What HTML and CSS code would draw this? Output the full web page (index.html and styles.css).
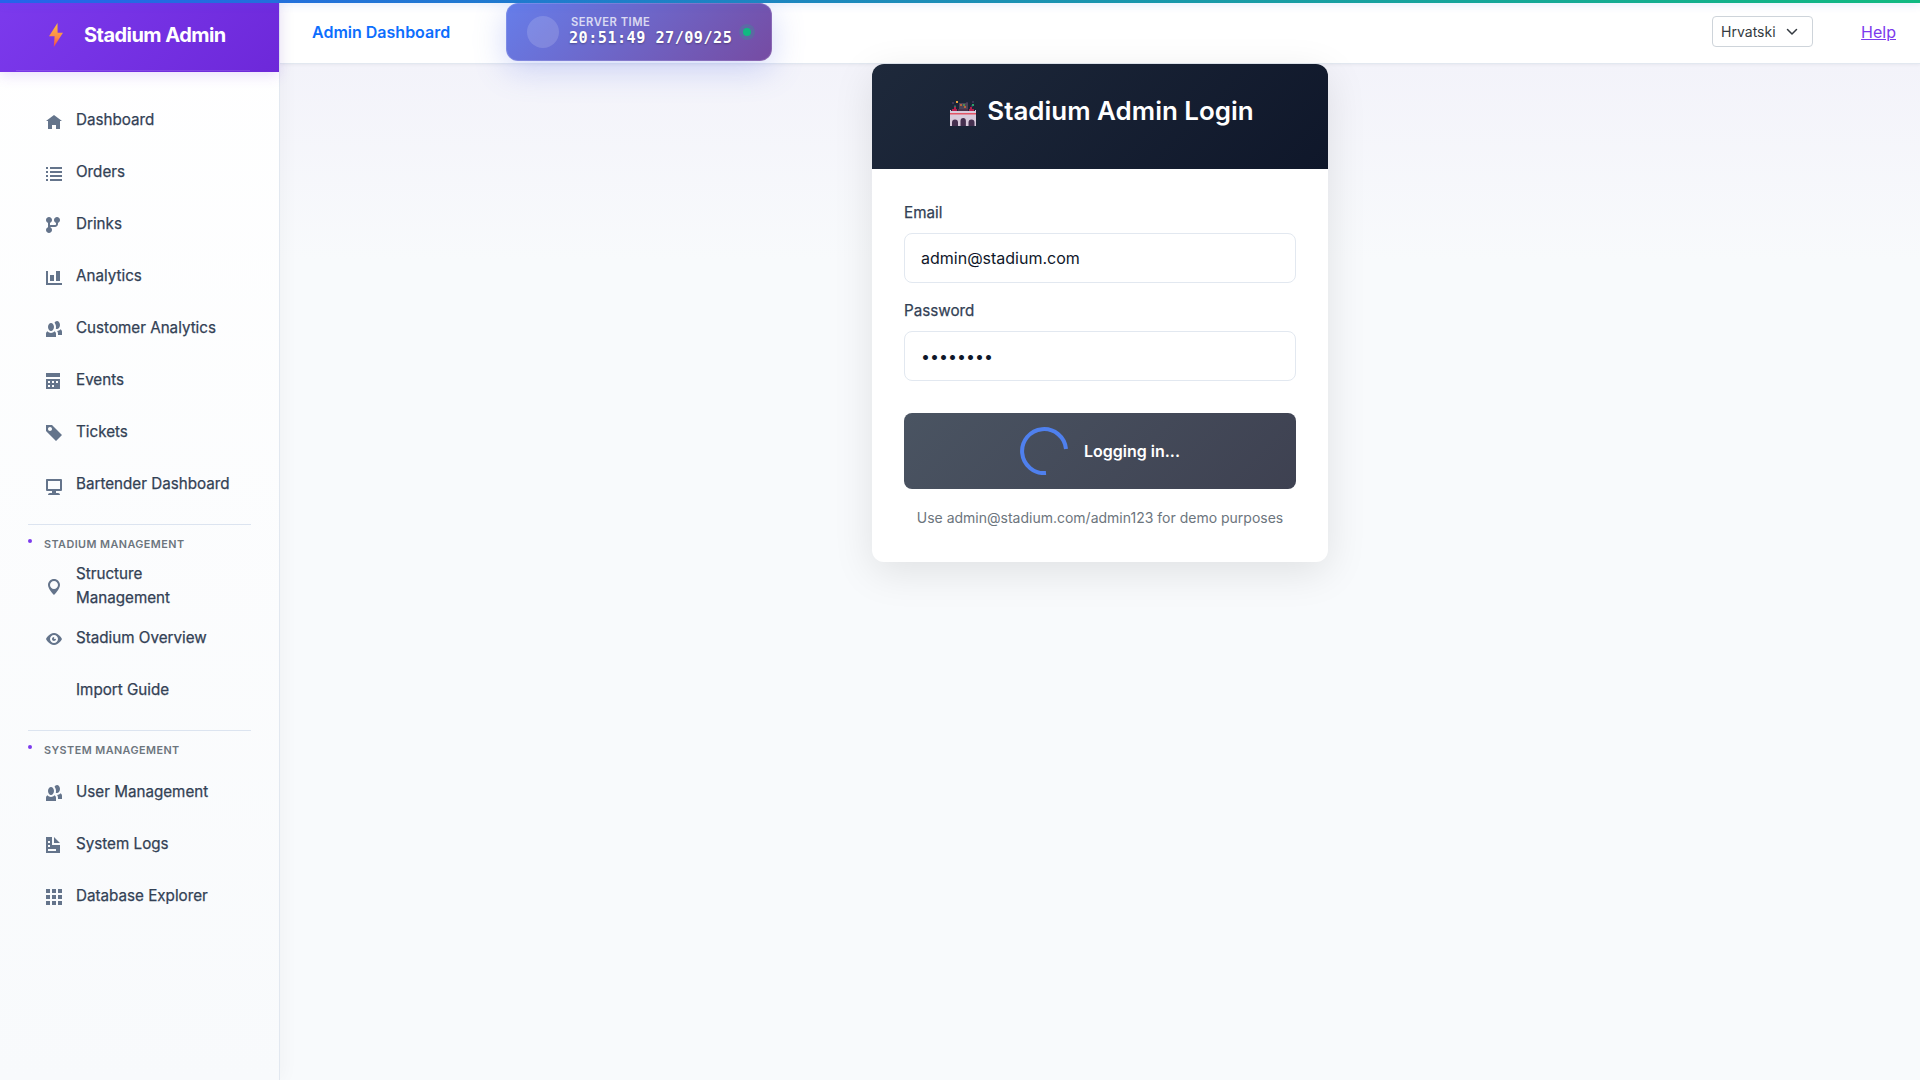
FILE: index.html
```html
<!DOCTYPE html>
<html lang="en">
<head>
<meta charset="utf-8">
<title>Stadium Admin</title>
<link rel="stylesheet" href="styles.css">
</head>
<body>
<div class="progress"></div>
<div class="page">
  <aside class="sidebar">
    <div class="brand">
      <svg class="bolt" viewBox="0 0 14 24"><defs><linearGradient id="bolt" x1="0" y1="0" x2="0" y2="1"><stop offset="0" stop-color="#fbbf3c"/><stop offset=".6" stop-color="#fb8a4a"/><stop offset="1" stop-color="#f0454a"/></linearGradient></defs><path d="M8.500 0 0 13.300h5.600L4.800 24 14 9.800H8.600z" fill="url(#bolt)"/></svg>
      <span>Stadium Admin</span>
    </div>
    <nav class="nav">
      <a class="item"><svg class="icon" viewBox="0 0 8 8"><path transform="translate(0 1)" d="M4 0l-4 3h1v4h2v-2h2v2h2v-4.03l1 .03-4-3z"/></svg>Dashboard</a>
      <a class="item"><svg class="icon" viewBox="0 0 8 8"><path transform="translate(0 1)" d="M0 0v1h1v-1zM2 0v1h6v-1zM0 2v1h1v-1zM2 2v1h6v-1zM0 4v1h1v-1zM2 4v1h6v-1zM0 6v1h1v-1zM2 6v1h6v-1z"/></svg>Orders</a>
      <a class="item"><svg class="icon" viewBox="0 0 8 8"><path d="M1.5 0c-.83 0-1.5.67-1.5 1.5 0 .66.41 1.2 1 1.41v2.19c-.59.2-1 .75-1 1.41 0 .83.67 1.5 1.5 1.5s1.5-.67 1.5-1.5c0-.6-.34-1.1-.84-1.34.09-.09.21-.16.34-.16h2c.82 0 1.5-.68 1.5-1.5v-.59c.59-.2 1-.75 1-1.41 0-.83-.67-1.5-1.5-1.5s-1.5.67-1.5 1.5c0 .66.41 1.2 1 1.41v.59c0 .28-.22.5-.5.5h-2c-.17 0-.35.04-.5.09v-1.19c.59-.2 1-.75 1-1.41 0-.83-.67-1.5-1.5-1.5z"/></svg>Drinks</a>
      <a class="item"><svg class="icon" viewBox="0 0 8 8"><path transform="translate(0 1)" d="M0 0v7h8v-1h-7v-6h-1zm5 0v5h2v-5h-2zm-3 2v3h2v-3h-2z"/></svg>Analytics</a>
      <a class="item"><svg class="icon" viewBox="0 0 8 8"><path d="M5.5 0c-.51 0-.95.35-1.22.88.45.54.72 1.28.72 2.13 0 .29-.03.55-.09.81.19.11.38.19.59.19.83 0 1.5-.9 1.5-2s-.67-2-1.5-2zm-3 1c-.83 0-1.5.9-1.5 2s.67 2 1.5 2 1.5-.9 1.5-2-.67-2-1.5-2zm4.75 3.16c-.43.51-1.02.82-1.69.84.27.38.44.84.44 1.34v.66h2v-1.66c0-.52-.31-.97-.75-1.19zm-6.5 1c-.44.22-.75.67-.75 1.19v1.66h5v-1.66c0-.52-.31-.97-.75-1.19-.45.53-1.06.84-1.75.84s-1.3-.32-1.75-.84z"/></svg>Customer Analytics</a>
      <a class="item"><svg class="icon" viewBox="0 0 8 8"><path d="M0 0v2h7v-2h-7zm0 3v4.91c0 .05.04.09.09.09h6.81c.05 0 .09-.04.09-.09v-4.91h-7zm1 1h1v1h-1v-1zm2 0h1v1h-1v-1zm2 0h1v1h-1v-1zm-4 2h1v1h-1v-1zm2 0h1v1h-1v-1z"/></svg>Events</a>
      <a class="item"><svg class="icon" viewBox="0 0 8 8"><path d="M0 0v3l5 5 3-3-5-5h-3zm2 1c.55 0 1 .45 1 1s-.45 1-1 1-1-.45-1-1 .45-1 1-1z"/></svg>Tickets</a>
      <a class="item"><svg class="icon" viewBox="0 0 8 8"><path transform="translate(0 1)" d="M.34 0a.5.5 0 0 0-.34.5v5a.5.5 0 0 0 .5.5h2.500v1h-1c-.55 0-1 .45-1 1h6c0-.55-.45-1-1-1h-1v-1h2.500a.5.5 0 0 0 .5-.5v-5a.5.5 0 0 0-.5-.5h-7a.5.5 0 0 0-.16 0zm.66 1h6v4h-6v-4z"/></svg>Bartender Dashboard</a>
      <div class="section">STADIUM MANAGEMENT</div>
      <a class="item"><svg class="icon" viewBox="0 0 8 8"><path transform="translate(1 0)" d="M3 0c-1.66 0-3 1.34-3 3 0 2 3 5 3 5s3-3 3-5c0-1.66-1.34-3-3-3zm0 1c1.11 0 2 .9 2 2 0 1.11-.89 2-2 2-1.1 0-2-.89-2-2 0-1.1.9-2 2-2z"/></svg>Structure Management</a>
      <a class="item"><svg class="icon" viewBox="0 0 8 8"><path transform="translate(0 1)" d="M4.03 0c-2.53 0-4.03 3-4.03 3s1.5 3 4.03 3c2.47 0 3.97-3 3.97-3s-1.5-3-3.97-3zm-.03 1c1.11 0 2 .9 2 2 0 1.11-.89 2-2 2-1.1 0-2-.89-2-2 0-1.1.9-2 2-2zm0 1c-.55 0-1 .45-1 1s.45 1 1 1 1-.45 1-1c0-.1-.04-.19-.06-.28-.08.16-.24.28-.44.28-.28 0-.5-.22-.5-.5 0-.2.12-.36.28-.44-.09-.03-.18-.06-.28-.06z"/></svg>Stadium Overview</a>
      <a class="item"><span class="icon"></span>Import Guide</a>
      <div class="section">SYSTEM MANAGEMENT</div>
      <a class="item"><svg class="icon" viewBox="0 0 8 8"><path d="M5.5 0c-.51 0-.95.35-1.22.88.45.54.72 1.28.72 2.13 0 .29-.03.55-.09.81.19.11.38.19.59.19.83 0 1.5-.9 1.5-2s-.67-2-1.5-2zm-3 1c-.83 0-1.5.9-1.5 2s.67 2 1.5 2 1.5-.9 1.5-2-.67-2-1.5-2zm4.75 3.16c-.43.51-1.02.82-1.69.84.27.38.44.84.44 1.34v.66h2v-1.66c0-.52-.31-.97-.75-1.19zm-6.5 1c-.44.22-.75.67-.75 1.19v1.66h5v-1.66c0-.52-.31-.97-.75-1.19-.45.53-1.06.84-1.75.84s-1.3-.32-1.75-.84z"/></svg>User Management</a>
      <a class="item"><svg class="icon" viewBox="0 0 8 8"><path d="M0 0v8h7v-4h-4v-4h-3zm4 0v3h3l-3-3zm-3 2h1v1h-1v-1zm0 2h1v1h-1v-1zm0 2h4v1h-4v-1z"/></svg>System Logs</a>
      <a class="item"><svg class="icon" viewBox="0 0 8 8"><path d="M0 0v2h2v-2h-2zm3 0v2h2v-2h-2zm3 0v2h2v-2h-2zm-6 3v2h2v-2h-2zm3 0v2h2v-2h-2zm3 0v2h2v-2h-2zm-6 3v2h2v-2h-2zm3 0v2h2v-2h-2zm3 0v2h2v-2h-2z"/></svg>Database Explorer</a>
    </nav>
  </aside>
  <main class="main">
    <header class="topbar">
      <span class="title">Admin Dashboard</span>
      <div class="clock">
        <span class="disc"></span>
        <div class="clock-text">
          <span class="clock-label">SERVER TIME</span>
          <span class="clock-value">20:51:49 27/09/25</span>
        </div>
        <span class="pulse"></span>
      </div>
      <div class="lang">Hrvatski<svg class="chevron" viewBox="0 0 12 8"><path d="M1.500 1.500 6 6l4.500-4.500" fill="none" stroke="#343a40" stroke-width="1.500" stroke-linecap="round" stroke-linejoin="round"/></svg></div>
      <a class="help" href="#">Help</a>
    </header>
    <section class="card">
      <div class="card-head">
        <svg class="stadium" viewBox="0 0 26 25">
          <path d="M2 1h2v2H2zM16 1h2v2h-2zM22 0h2v2h-2zM4 4h2v2H4zM21 4h2v2h-2z" fill="#3b3555"/>
          <path d="M6 0h2v2H6z" fill="#e9a23b"/><path d="M22 3h2v2h-2z" fill="#28a06b"/><path d="M4 5h2v2H4z" fill="#28805f"/>
          <path d="M9 2h9v6H9z" fill="#4c4358"/><path d="M10 3h2v2h-2zM14 5h2v2h-2z" fill="#b5643c"/><path d="M13 3h2v2h-2z" fill="#4d8a55"/>
          <path d="M2 8h5v2H2zM19 8h5v2h-5zM4 6h2v2H4zM20 6h2v2h-2z" fill="#b51f4d"/><path d="M8 8h10v3H8z" fill="#4a3148"/>
          <path d="M0 9h1v1h24V9h1v16H0z" fill="#d9cbdc"/><path d="M0 12h26v1.500H0z" fill="#e25566"/>
          <path d="M2 25v-3.500a3 3 0 0 1 6 0V25zM10.500 25v-5a2.700 3 0 0 1 5.400 0v5zM18.500 25v-3.500a3 3 0 0 1 6 0V25z" fill="#45304f"/>
        </svg>
        <h1>Stadium Admin Login</h1>
      </div>
      <form class="form">
        <label for="email">Email</label>
        <input id="email" type="text" value="admin@stadium.com">
        <label for="password">Password</label>
        <input id="password" type="password" value="admin123">
        <button type="button" class="submit">
          <svg class="spinner" viewBox="0 0 48 48"><path d="M46 22A22 22 0 1 0 26 46" fill="none" stroke="#4f80ee" stroke-width="4"/></svg>
          Logging in...
        </button>
        <p class="hint">Use admin@stadium.com/admin123 for demo purposes</p>
      </form>
    </section>
  </main>
</div>
</body>
</html>
```
FILE: styles.css
```css
* { box-sizing: border-box; }
body {
  margin: 0;
  height: 1080px;
  overflow: hidden;
  font-family: Inter, "Liberation Sans", sans-serif;
  color: #0f172a;
  background: #f8fafc;
}
.progress {
  position: absolute;
  z-index: 5;
  top: 0; left: 0; right: 0;
  height: 3px;
  background: linear-gradient(90deg, #2563eb, #10b981);
  box-shadow: 0 0 10px rgba(37, 99, 235, .3);
}
.page { display: flex; height: 1080px; }
.sidebar {
  flex: none;
  width: 280px;
  border-right: 1px solid #e2e8f0;
  background: linear-gradient(180deg, #fff, #f8fafc);
  box-shadow: 4px 0 16px rgba(15, 23, 42, .03);
  z-index: 1;
}
.brand {
  position: relative;
  display: flex;
  align-items: center;
  height: 72px;
  padding: 0 0 2px 49px;
  gap: 21px;
  color: #fff;
  font-size: 20px;
  font-weight: 700;
  letter-spacing: -.54px;
  background: linear-gradient(135deg, #7c3aed, #6d28d9);
  box-shadow: 0 4px 12px rgba(124, 58, 237, .15);
}
.brand::after {
  content: "";
  position: absolute;
  left: 16px; right: 29px; bottom: 1px;
  height: 1px;
  background: rgba(255, 255, 255, .12);
}
.bolt { width: 14px; height: 24px; }
.nav { padding: 25px 28px 0; }
.item {
  display: flex;
  align-items: center;
  height: 48px;
  margin-bottom: 4px;
  padding: 0 18px 2px;
  gap: 14px;
  font-size: 15.2px;
  line-height: 24px;
  color: #334155;
  -webkit-text-stroke: .25px #334155;
}
.icon { flex: none; width: 16px; height: 16px; fill: #64748b; overflow: visible; margin-top: 2px; -webkit-text-stroke: 0; }
.section {
  position: relative;
  height: 39px;
  margin-top: 15px;
  padding: 11px 0 0 16px;
  border-top: 1px solid #dce4f0;
  font-size: 10.8px;
  font-weight: 600;
  line-height: 18px;
  letter-spacing: .45px;
  color: #6c757d;
}
.section::before {
  content: "";
  position: absolute;
  left: 0; top: 14px;
  width: 4px; height: 4px;
  border-radius: 50%;
  background: #7c3aed;
}
.main {
  flex: 1;
  background: linear-gradient(180deg, #f3f3fa 64px, #f8fafc 260px);
}
.topbar {
  display: flex;
  align-items: center;
  height: 64px;
  padding: 0 24px 0 32px;
  background: #fff;
  border-bottom: 1px solid #e2e8f0;
  box-shadow: 0 1px 3px rgba(15, 23, 42, .05);
}
.title { width: 194px; font-size: 16px; font-weight: 600; color: #0d6efd; }
.clock {
  display: flex;
  align-items: center;
  width: 266px;
  height: 58px;
  margin-top: 1px;
  padding: 0 20px;
  border: 1px solid rgba(255, 255, 255, .15);
  border-radius: 12px;
  background: linear-gradient(135deg, #667eea, #764ba2) border-box;
  box-shadow: 0 8px 32px rgba(102, 126, 234, .3);
  color: #fff;
}
.disc { width: 32px; height: 32px; border-radius: 50%; background: rgba(255, 255, 255, .15); }
.clock-text { display: flex; flex-direction: column; flex: none; margin: 0 0 3px 10px; width: 174px; }
.clock-label { margin-left: 2px; font-size: 11.2px; font-weight: 600; line-height: 16px; letter-spacing: .5px; opacity: .75; }
.clock-value { font: 700 15.2px/17px "DejaVu Sans Mono", monospace; letter-spacing: .46px; text-shadow: 0 1px 2px rgba(0, 0, 0, .3); }
.pulse { flex: none; width: 8px; height: 8px; border-radius: 50%; background: #10b981; box-shadow: 0 0 0 4px rgba(16, 185, 129, .2); }
.lang {
  display: flex;
  align-items: center;
  justify-content: space-between;
  width: 101px;
  height: 31px;
  margin-left: auto;
  padding: 0 14px 0 8px;
  border: 1px solid #ced4da;
  border-radius: 4px;
  font-size: 14px;
  color: #343a40;
}
.chevron { width: 12px; height: 8px; }
.help { margin-left: 48px; font-size: 16px; color: #7c3aed; }
.card {
  width: 456px;
  height: 498px;
  margin: 0 auto;
  border-radius: 12px;
  background: #fff;
  box-shadow: 0 10px 40px rgba(0, 0, 0, .1);
}
.card-head {
  display: flex;
  justify-content: center;
  height: 105px;
  padding: 29px 0 0 4px;
  gap: 11px;
  border-radius: 12px 12px 0 0;
  background: linear-gradient(135deg, #1e293b, #0f172a);
}
.stadium { width: 26px; height: 25px; margin-top: 8px; }
h1 { margin: 0; font-size: 25.95px; font-weight: 600; line-height: 36px; color: #fff; }
.form { display: flex; flex-direction: column; padding: 32px; }
label { margin-bottom: 8px; font-size: 15.2px; line-height: 24px; color: #334155; -webkit-text-stroke: .25px #334155; }
input {
  height: 50px;
  margin-bottom: 16px;
  padding: 0 16px;
  border: 1px solid #e2e8f0;
  border-radius: 8px;
  outline: 0;
  font: 400 16px Inter, sans-serif;
  color: #0f172a;
}
.submit {
  display: flex;
  align-items: center;
  justify-content: center;
  gap: 16px;
  height: 76px;
  margin-top: 16px;
  border: 0;
  border-radius: 8px;
  background: linear-gradient(135deg, #4a5462, #3e4151);
  font: 600 16px Inter, sans-serif;
  color: #fff;
}
.spinner { width: 48px; height: 48px; }
.hint { margin: 18px 0 0; font-size: 14px; line-height: 22px; text-align: center; color: #6c757d; }
```
